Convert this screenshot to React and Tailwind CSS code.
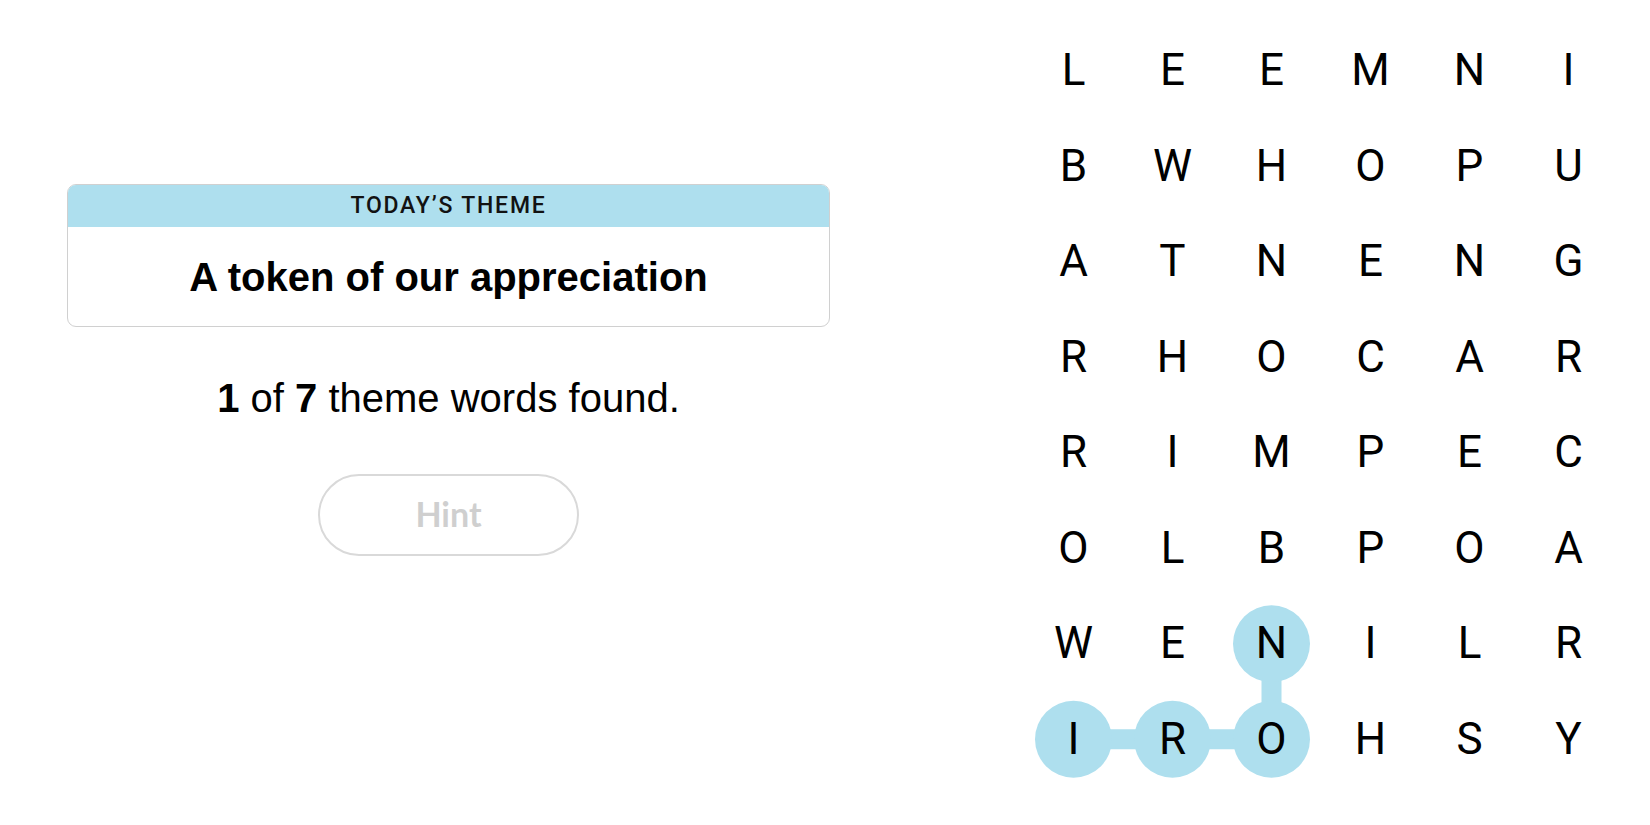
import React from "react";

const GRID = [
  "LEEMNI",
  "BWHOPU",
  "ATNENG",
  "RHOCAR",
  "RIMPEC",
  "OLBPOA",
  "WENILR",
  "IROHSY",
];

const CW = 99;
const CH = 95.5;
const path = [
  [6, 2],
  [7, 2],
  [7, 1],
  [7, 0],
];
const cx = (c) => c * CW + CW / 2;
const cy = (r) => r * CH + CH / 2;

export default function App() {
  return (
    <div className="w-[1650px] h-[825px] bg-white flex overflow-hidden">
      <div className="w-[897px] shrink-0 px-[67px] pt-[184px] flex flex-col items-center">
        <div className="w-full rounded-[9px] border border-[#d0d0d0] overflow-hidden">
          <div
            className="h-[42px] bg-[#aedfee] flex items-center justify-center text-[23px] font-medium tracking-[1.8px] text-[#121212]"
            style={{ fontFamily: "Roboto, sans-serif" }}
          >
            TODAY’S THEME
          </div>
          <div
            className="h-[99px] flex items-center justify-center text-[40px] font-bold text-black"
            style={{ fontFamily: "'Liberation Sans', Arial, sans-serif" }}
          >
            A token of our appreciation
          </div>
        </div>
        <div
          className="mt-[47px] text-[40px] leading-[48px] text-black"
          style={{ fontFamily: "'Liberation Sans', Arial, sans-serif" }}
        >
          <b>1</b> of <b>7</b> theme words found.
        </div>
        <button
          className="mt-[52px] w-[261px] h-[82px] rounded-full border-2 border-[#d9d9d9] text-[34px] font-bold text-[#cfcfcf] bg-white pb-[4px]"
          style={{ fontFamily: "Lato, sans-serif" }}
        >
          Hint
        </button>
      </div>
      <div className="ml-[127px] mt-[22.5px] relative w-[594px] h-[764px]">
        <svg
          className="absolute inset-0"
          width={594}
          height={764}
          viewBox="0 0 594 764"
        >
          <polyline
            points={path.map(([r, c]) => `${cx(c)},${cy(r)}`).join(" ")}
            fill="none"
            stroke="#aedfee"
            strokeWidth={20}
          />
          {path.map(([r, c]) => (
            <circle key={`${r}-${c}`} cx={cx(c)} cy={cy(r)} r={38.5} fill="#aedfee" />
          ))}
        </svg>
        <div className="relative grid grid-cols-[repeat(6,99px)] grid-rows-[repeat(8,95.5px)]">
          {GRID.flatMap((row, r) =>
            row.split("").map((ch, c) => (
              <div
                key={`${r}-${c}`}
                className="flex items-center justify-center text-[44px] font-normal text-black"
                style={{ fontFamily: "Roboto, sans-serif" }}
              >
                {ch}
              </div>
            ))
          )}
        </div>
      </div>
    </div>
  );
}
